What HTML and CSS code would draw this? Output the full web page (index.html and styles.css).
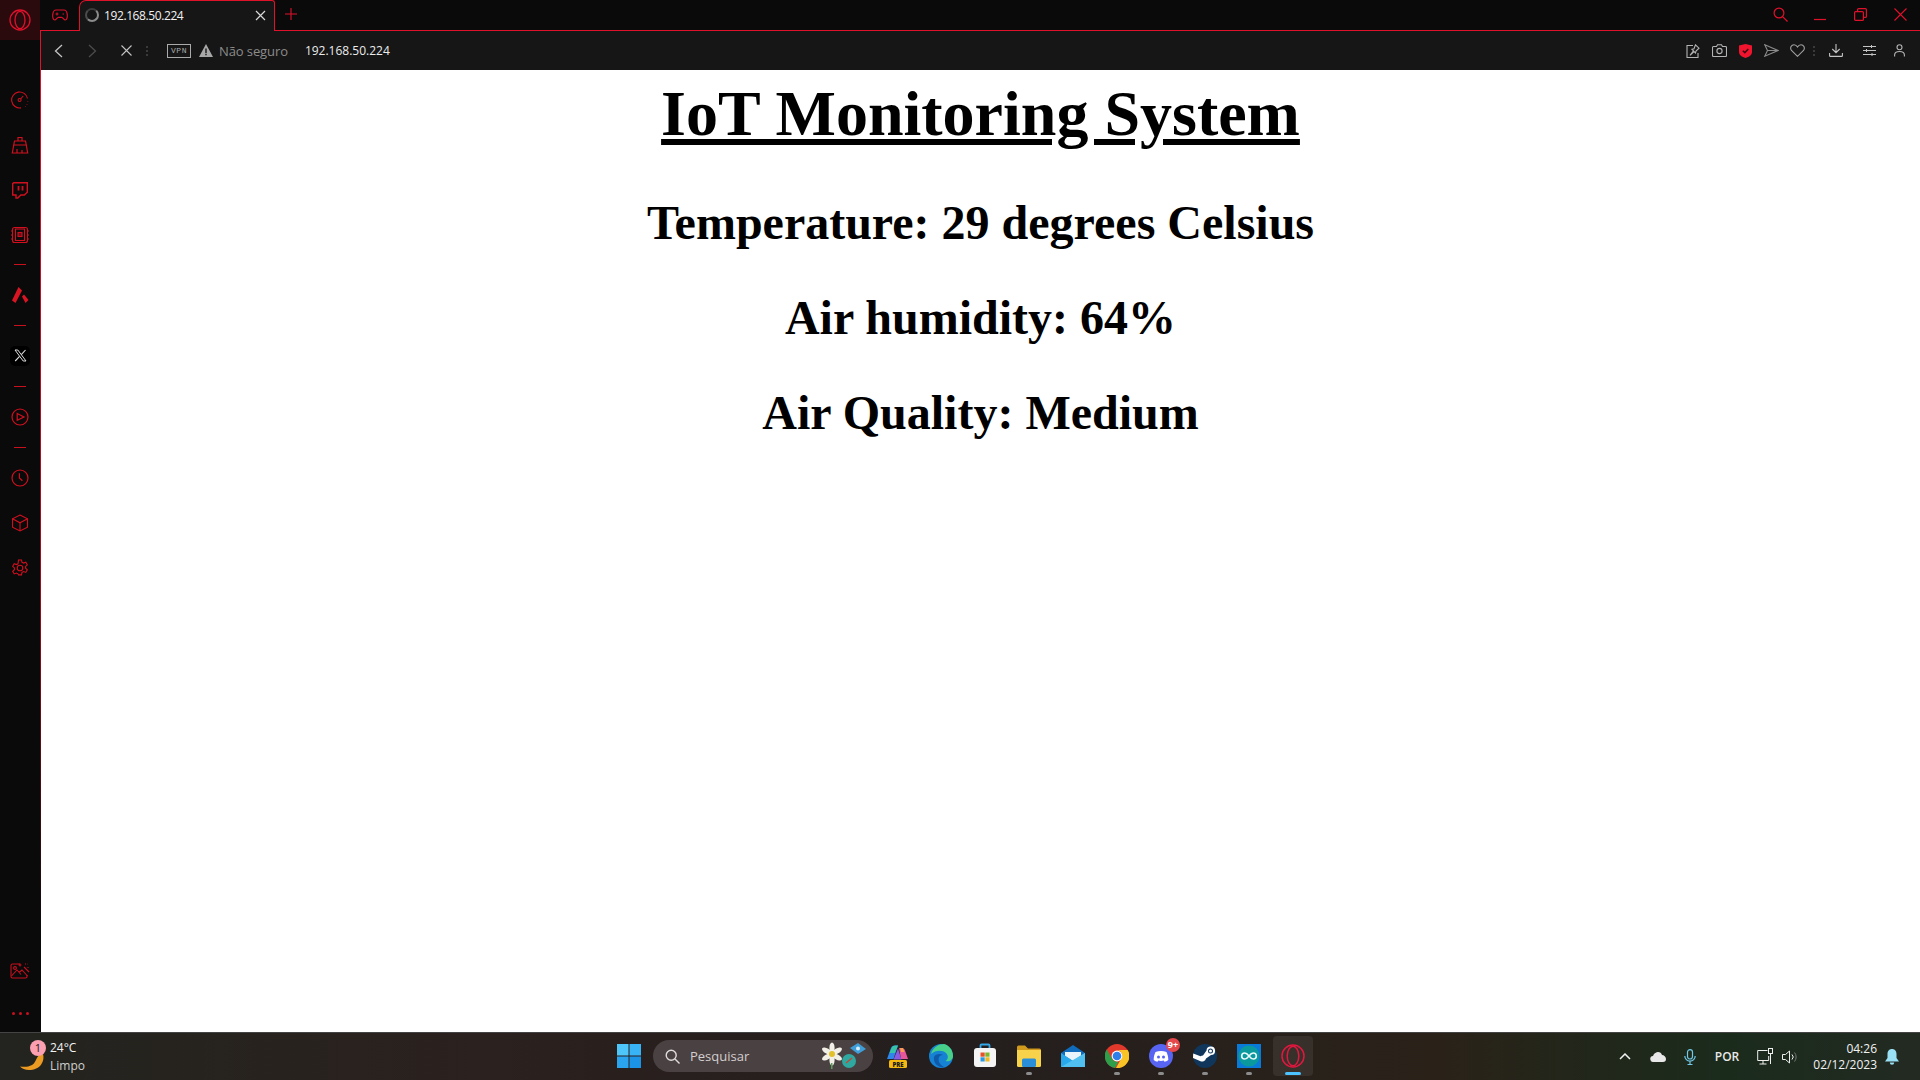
FILE: index.html
```html
<!doctype html>
<html lang="en">
  <head>
    <meta charset="UTF-8" />
    <meta name="viewport" content="width=device-width, initial-scale=1.0" />
    <title>IoT Monitoring System</title>
    <link rel="stylesheet" href="styles.css">
  </head>
  <body>
    <div class="desktop">
      <div class="browser">
        <!-- Sidebar -->
        <aside class="sidebar">
          <div class="side-logo">
            <svg width="24" height="24" viewBox="0 0 24 24" fill="none" stroke="#e0112b" stroke-width="1.3"><circle cx="12" cy="12" r="10"/><ellipse cx="12" cy="12" rx="5" ry="8.6"/></svg>
          </div>
          <div class="side-items">
            <div class="side-item">
              <svg width="18" height="18" viewBox="0 0 18 18" fill="none" stroke="#d0101f" stroke-width="1.1"><path d="M16.5 7.5A8 8 0 1 0 10 16.9"/><circle cx="8.6" cy="9" r="1.5"/><path d="M9.6 8l2.6-3"/><path d="M16.8 10v.6M16 13v.6M14.400 15.300v.5" stroke-width="1"/></svg>
            </div>
            <div class="side-item">
              <svg width="18" height="18" viewBox="0 0 18 18" fill="none" stroke="#d0101f" stroke-width="1.2"><path d="M7 5V1.500h4V5"/><path d="M3.500 5h11l2.200 12H1.300z"/><path d="M2.600 9h12.800M6 17v-4M11 17v-3"/></svg>
            </div>
            <div class="side-item">
              <svg width="18" height="18" viewBox="0 0 18 18" fill="none" stroke="#d0101f" stroke-width="1.400"><path d="M1.700 2.600 2.800 1.700h13.500v9.500l-3 2.800H9.800l-3 3H5v-3H1.700z"/><path d="M7.500 5v4.500M11.500 5v4.500" stroke-width="1.800"/></svg>
            </div>
            <div class="side-item">
              <svg width="18" height="18" viewBox="0 0 18 18" fill="none" stroke="#d0101f" stroke-width="1.100"><rect x="1.500" y="1.500" width="15" height="15" rx="2"/><rect x="4.500" y="3" width="9" height="11.500"/><rect x="7" y="6.500" width="4" height="4" fill="#d0101f" fill-opacity=".5"/><path d="M0 5h1.500M0 9h1.500M0 13h1.500M16.500 5H18M16.500 9H18M16.500 13H18"/></svg>
            </div>
            <div class="side-sep"></div>
            <div class="side-item short">
              <svg width="18" height="18" viewBox="0 0 18 18" fill="#d91524"><path d="M7.500 1 11 4.500 4.500 17 1 14.500z"/><path d="M11 10.500 13 8.500 17.500 14 14.500 17z"/></svg>
            </div>
            <div class="side-sep"></div>
            <div class="side-item short">
              <div class="x-tile">
                <svg width="13" height="13" viewBox="0 0 13 13" fill="none" stroke="#dcdcdc"><path d="M1 1h2.800l8.200 11H9.200z" stroke-width="1"/><path d="M11.500 1 7.300 5.600M5.600 7.300 1.200 12" stroke-width="1.100"/></svg>
              </div>
            </div>
            <div class="side-sep"></div>
            <div class="side-item short">
              <svg width="18" height="18" viewBox="0 0 18 18" fill="none" stroke="#d0101f" stroke-width="1.200"><circle cx="9" cy="9" r="8"/><path d="M6.200 5.500 13 9l-6.800 3.300z"/></svg>
            </div>
            <div class="side-sep"></div>
            <div class="side-item short-top">
              <svg width="18" height="18" viewBox="0 0 18 18" fill="none" stroke="#d0101f" stroke-width="1.200"><circle cx="9" cy="9" r="8"/><path d="M8.400 4.200V9l3 2.800"/></svg>
            </div>
            <div class="side-item">
              <svg width="18" height="18" viewBox="0 0 18 18" fill="none" stroke="#d0101f" stroke-width="1.100"><path d="M9 1l7.500 3.800v8.400L9 17l-7.500-3.800V4.800z"/><path d="M1.500 4.800 9 8.800l7.500-4M9 8.800V17"/></svg>
            </div>
            <div class="side-item">
              <svg width="18" height="18" viewBox="0 0 18 18" fill="none" stroke="#d0101f" stroke-width="1.100"><circle cx="9" cy="9" r="2.800"/><path d="M7.500 1h3l.5 2.300 1.600.8 2.200-.9 1.500 2.600-1.700 1.600v1.800l1.700 1.600-1.500 2.600-2.200-.9-1.600.8-.5 2.600h-3L7 14.800l-1.600-.8-2.200.9-1.500-2.600 1.700-1.600V8.900L1.700 7.300l1.500-2.600 2.200.9L7 4.800z"/></svg>
            </div>
          </div>
          <div class="side-bottom">
            <svg width="20" height="18" viewBox="0 0 20 18" fill="none" stroke="#c8101f" stroke-width="1.100"><path d="M10 2H2.500A1.500 1.500 0 0 0 1 3.500v11A1.500 1.500 0 0 0 2.500 16h13A1.500 1.500 0 0 0 17 14.500V13"/><path d="M1.500 14 7 8l4 4.500M9 10.500 12 8l5.500 6"/><circle cx="5" cy="6" r="1.400"/><path d="M10 1.500v3M8.500 3h3M14 5l5 5" /><path d="M15 2h2.500M18 5v2" stroke-dasharray="1 1"/></svg>
            <div class="side-more"><span></span><span></span><span></span></div>
          </div>
        </aside>

        <div class="window">
          <!-- Tab strip -->
          <div class="titlebar">
            <div class="games-btn">
              <svg width="16" height="12" viewBox="0 0 16 12" fill="none" stroke="#d8122a" stroke-width="1.200"><path d="M4 1h8c2 0 2.800 1.500 3.200 4 .4 3-.2 6-2 6-1.600 0-2-2.600-3.700-2.600H6.500C4.800 8.400 4.400 11 2.800 11 1 11 .4 8 .8 5 1.200 2.500 2 1 4 1z"/><path d="M3.500 5h3M5 3.500v3M10.500 5h1.500" stroke-width="1"/></svg>
            </div>
            <div class="tab">
              <span class="tab-spinner"></span>
              <span class="tab-title">192.168.50.224</span>
              <svg class="tab-close" width="11" height="11" viewBox="0 0 11 11" fill="none" stroke="#d8d8d8" stroke-width="1.200"><path d="M1 1l9 9M10 1l-9 9"/></svg>
            </div>
            <svg class="tab-add" width="12" height="12" viewBox="0 0 12 12" stroke="#e0112b" stroke-width="1.100"><path d="M6 0v12M0 6h12"/></svg>
            <div class="win-controls">
              <div class="win-btn">
                <svg width="15" height="15" viewBox="0 0 15 15" fill="none" stroke="#e0112b" stroke-width="1.200"><circle cx="6" cy="6" r="4.900"/><path d="M9.600 9.600 14.500 14.500"/></svg>
              </div>
              <div class="win-btn">
                <svg width="12" height="12" viewBox="0 0 12 12" stroke="#e0112b" stroke-width="1.200"><path d="M0 10.500h12"/></svg>
              </div>
              <div class="win-btn">
                <svg width="13" height="13" viewBox="0 0 13 13" fill="none" stroke="#e0112b" stroke-width="1.200"><rect x=".6" y="3.600" width="8.800" height="8.800" rx="1"/><path d="M3.600 3.500V1.600a1 1 0 0 1 1-1h6.800a1 1 0 0 1 1 1v6.800a1 1 0 0 1-1 1H9.500"/></svg>
              </div>
              <div class="win-btn">
                <svg width="13" height="13" viewBox="0 0 13 13" stroke="#e0112b" stroke-width="1.100"><path d="M.5.500l12 12M12.500.5l-12 12"/></svg>
              </div>
            </div>
          </div>

          <!-- Address bar -->
          <div class="toolbar">
            <div class="tool-btn back-btn">
              <svg width="9" height="14" viewBox="0 0 9 14" fill="none" stroke="#c4c4c4" stroke-width="1.300"><path d="M8 1 1.500 7 8 13"/></svg>
            </div>
            <div class="tool-btn forward-btn">
              <svg width="9" height="14" viewBox="0 0 9 14" fill="none" stroke="#4c4c4c" stroke-width="1.300"><path d="M1 1l6.500 6L1 13"/></svg>
            </div>
            <div class="tool-btn stop-btn">
              <svg width="11" height="11" viewBox="0 0 11 11" fill="none" stroke="#c4c4c4" stroke-width="1.100"><path d="M.5.500l10 10M10.500.5l-10 10"/></svg>
            </div>
            <div class="tool-dots"><span></span><span></span><span></span></div>
            <div class="vpn-badge">VPN</div>
            <svg class="warn-icon" width="14" height="13" viewBox="0 0 14 13"><path fill="#a8a8a8" fill-rule="evenodd" d="M7 0 14 13H0zM6.300 4.500v4.500h1.400V4.500zm0 5.300v1.500h1.400V9.800z"/></svg>
            <span class="not-secure">Não seguro</span>
            <span class="url">192.168.50.224</span>
            <div class="tool-right">
              <div class="icon-btn">
                <svg width="14" height="14" viewBox="0 0 14 14" fill="none" stroke="#b4b4b4" stroke-width="1.100"><path d="M7 1.500H1v12h11V9"/><path d="M9.500.8 13 4.200 10 7l-.5 2-1.500-1.500L4 11.300l3.500-4.500L6 5.300l2-.5z"/></svg>
              </div>
              <div class="icon-btn">
                <svg width="15" height="13" viewBox="0 0 15 13" fill="none" stroke="#b4b4b4" stroke-width="1.100"><path d="M1.500 2.500h3L5.500.7h4l1 1.800h3a1 1 0 0 1 1 1v8a1 1 0 0 1-1 1h-12a1 1 0 0 1-1-1v-8a1 1 0 0 1 1-1z"/><circle cx="7.500" cy="7" r="2.600"/></svg>
              </div>
              <div class="icon-btn">
                <svg width="13" height="14" viewBox="0 0 13 14"><path fill="#f0142f" d="M6.500 0 13 1.500V8c0 3-3 5-6.500 6C3 13 0 11 0 8V1.500z"/><path d="M3.800 6.800 5.800 8.600 9.300 5" fill="none" stroke="#3a0a10" stroke-width="1.500"/></svg>
              </div>
              <div class="icon-btn">
                <svg width="15" height="13" viewBox="0 0 15 13" fill="none" stroke="#8a8a8a" stroke-width="1.100"><path d="M.8.800 14 6.500.8 12.200 3.500 6.500zM3.500 6.500H14"/></svg>
              </div>
              <div class="icon-btn">
                <svg width="15" height="13" viewBox="0 0 15 13" fill="none" stroke="#a0a0a0" stroke-width="1.100"><path d="M7.500 12.300 1.500 6.500C-.5 3.800 1.500.7 4 .7c1.500 0 2.700.9 3.500 2.300C8.300 1.600 9.500.7 11 .7c2.500 0 4.500 3.100 2.500 5.800z"/></svg>
              </div>
              <div class="tool-dots narrow"><span></span><span></span><span></span></div>
              <div class="icon-btn wide">
                <svg width="14" height="13" viewBox="0 0 14 13" fill="none" stroke="#c4c4c4" stroke-width="1.100"><path d="M7 0v8.500M3.300 5 7 8.700 10.700 5M.6 9v2.700a.7.7 0 0 0 .7.700h11.400a.7.7 0 0 0 .7-.7V9"/></svg>
              </div>
              <div class="icon-btn mid">
                <svg width="13" height="11" viewBox="0 0 13 11" fill="none" stroke="#c4c4c4"><path d="M0 1.500h13M0 5.500h13M0 9.500h13"/><path d="M8.500 0v3M3.500 4v3M9 8v3"/></svg>
              </div>
              <div class="icon-btn last">
                <svg width="11" height="13" viewBox="0 0 11 13" fill="none" stroke="#b4b4b4" stroke-width="1.100"><circle cx="5.500" cy="3.200" r="2.500"/><path d="M.6 12.500V11c0-2 2-3.500 4.900-3.500s4.900 1.500 4.900 3.500v1.500"/></svg>
              </div>
            </div>
          </div>

          <!-- Page content -->
          <main class="page">
            <h1 class="page-title">IoT Monitoring System</h1>
            <h2 class="reading">Temperature: 29 degrees Celsius</h2>
            <h2 class="reading">Air humidity: 64%</h2>
            <h2 class="reading">Air Quality: Medium</h2>
          </main>
        </div>
      </div>

      <!-- Windows taskbar -->
      <footer class="taskbar">
        <div class="weather">
          <div class="weather-icon">
            <svg width="24" height="16" viewBox="0 0 24 16"><path fill="#eb9a22" d="M23 0c1 3 .5 7-1.500 10C19 14 14 16 9 16 5 16 2 14.500 0 12.500c4 .7 8.500.5 12-1.500 3-1.700 4-5.500 5.500-8C18.500 1.500 20.500.3 23 0z"/></svg>
            <span class="weather-badge">1</span>
          </div>
          <div class="weather-text">
            <span class="weather-temp">24°C</span>
            <span class="weather-desc">Limpo</span>
          </div>
        </div>

        <div class="task-center">
          <div class="task-app">
            <svg width="24" height="24" viewBox="0 0 24 24"><path fill="#4fc6fa" d="M0 0h11.500v11.500H0z"/><path fill="#38b3f5" d="M12.500 0H24v11.500H12.500z"/><path fill="#2aa4ee" d="M0 12.500h11.500V24H0z"/><path fill="#1c94e6" d="M12.500 12.500H24V24H12.500z"/></svg>
          </div>
          <div class="search-box">
            <svg width="15" height="15" viewBox="0 0 15 15" fill="none" stroke="#e0dcdc" stroke-width="1.400"><circle cx="6.200" cy="6.200" r="5"/><path d="M10 10l4.500 4.500"/></svg>
            <span class="search-label">Pesquisar</span>
            <svg class="search-art" width="46" height="28" viewBox="0 0 46 28"><g fill="#f2f0e6"><ellipse cx="11" cy="6" rx="2.600" ry="5.500"/><ellipse cx="11" cy="18" rx="2.600" ry="5.500"/><ellipse cx="6" cy="9" rx="5.500" ry="2.600" transform="rotate(30 6 9)"/><ellipse cx="16" cy="9" rx="5.500" ry="2.600" transform="rotate(-30 16 9)"/><ellipse cx="6" cy="15" rx="5.500" ry="2.600" transform="rotate(-30 6 15)"/><ellipse cx="16" cy="15" rx="5.500" ry="2.600" transform="rotate(30 16 15)"/></g><circle cx="11" cy="12" r="3" fill="#e2c02a"/><path d="M10 21h1.500v6H10z" fill="#5aa05a"/><circle cx="28" cy="19" r="7" fill="#2fa8a0"/><path d="M25 21l6-5" stroke="#c04a3a" stroke-width="1.500"/><path fill="#3f9ed8" d="M29 6l8-5 8 6-8 5z"/><circle cx="37" cy="6.500" r="2" fill="#d8eef8"/></svg>
          </div>
          <div class="task-app first-app">
            <svg width="24" height="24" viewBox="0 0 24 24"><path fill="#2f86ea" d="M2 15 6 4c.6-1.500 1.800-2.500 3.500-2.500H13L8.500 15z"/><path fill="#35c4a8" d="M6.500 4c1-1.800 2.500-2.500 4-2.500H13L10 9H4.500z"/><path fill="#e8569a" d="M14 4h3c1.500 0 2.500 1 3 2.500L23 15h-7z"/><path fill="#8a5ae0" d="M8.500 15.500 13 4.500 16.500 15.500z"/><path fill="#f5a04a" d="M15 4h3l1.500 4H16z"/><rect x="4" y="16" width="18" height="8" rx="1.500" fill="#f5b90f"/><text class="pre-text" x="13" y="22.600" text-anchor="middle">PRE</text></svg>
          </div>
          <div class="task-app">
            <svg width="24" height="24" viewBox="0 0 24 24"><circle cx="12" cy="12" r="12" fill="#1682d4"/><path fill="#46d08a" d="M2 10C4 3 10 0 15 0c5 1 9 6 9 12 0 4-4 6-7.500 5 3-2 3-5.500.5-8-3.500-3.500-11-3-15 1z"/><path fill="#0e5aa8" d="M5 13c1-3 6-4 9-2-4 0-5 3-4 7 1 2 3 4 5 5-5 1-11-3-10-10z"/></svg>
          </div>
          <div class="task-app">
            <svg width="24" height="25" viewBox="0 0 24 25"><path d="M7.500 6V2.500a1 1 0 0 1 1-1h7a1 1 0 0 1 1 1V6" fill="none" stroke="#35a8e8" stroke-width="1.800"/><rect x="1" y="5" width="22" height="19" rx="3" fill="#f4f4f4"/><path fill="#e8502a" d="M7.500 9.500H11.700v4.200H7.500z"/><path fill="#7cb82a" d="M12.300 9.500h4.200v4.200h-4.200z"/><path fill="#2a9ae8" d="M7.500 14.300H11.700v4.200H7.500z"/><path fill="#f5b81f" d="M12.300 14.300h4.200v4.200h-4.200z"/></svg>
          </div>
          <div class="task-app">
            <svg width="24" height="22" viewBox="0 0 24 22"><path fill="#d19a1c" d="M0 2a1.500 1.500 0 0 1 1.500-1.500h6.500L11 3.500h11.500A1.500 1.500 0 0 1 24 5v3H0z"/><path fill="#f8d24a" d="M0 5h24v15.500a1.500 1.500 0 0 1-1.500 1.500h-21A1.500 1.500 0 0 1 0 20.500z"/><rect x="5" y="13.500" width="14" height="8.500" rx="1.500" fill="#2a8fd8"/></svg>
            <span class="run-dot"></span>
          </div>
          <div class="task-app">
            <svg width="24" height="22" viewBox="0 0 24 22"><path fill="#0f6cbd" d="M12 0 24 8v14H0V8z"/><path fill="#e8f4fc" d="M4 7h16v4l-8 5-8-5z"/><path fill="#28a8ea" d="M0 8l12 8 12-8v14H0z"/><path fill="#50c0f0" d="M24 8v14H0z"/></svg>
          </div>
          <div class="task-app">
            <svg width="24" height="24" viewBox="0 0 24 24"><circle cx="12" cy="12" r="12" fill="#e0392b"/><path fill="#f7c325" d="M12 6h10.700A12 12 0 0 1 11 24l5.300-9.500A5.500 5.500 0 0 0 12 6z"/><path fill="#2e9e4a" d="M1.800 5.500 7.200 15a5.500 5.500 0 0 0 6.300 2.500L10 24A12 12 0 0 1 1.800 5.500z"/><circle cx="12" cy="12" r="5.400" fill="#fff"/><circle cx="12" cy="12" r="4.300" fill="#2f7fe8"/></svg>
            <span class="run-dot"></span>
          </div>
          <div class="task-app">
            <svg width="24" height="24" viewBox="0 0 24 24"><circle cx="12" cy="12" r="12" fill="#5865f2"/><path fill="#fff" d="M6.500 8c3.500-1.500 7.500-1.500 11 0 1.200 2.500 1.800 5 1.800 8-1.300 1-2.500 1.500-3.800 1.800l-.8-1.300c-1.800.5-3.600.5-5.400 0l-.8 1.300c-1.300-.3-2.500-.8-3.800-1.800 0-3 .6-5.500 1.800-8z"/><circle cx="9.500" cy="13" r="1.500" fill="#5865f2"/><circle cx="14.500" cy="13" r="1.500" fill="#5865f2"/></svg>
            <span class="chat-badge">9+</span>
            <span class="run-dot"></span>
          </div>
          <div class="task-app">
            <svg width="24" height="24" viewBox="0 0 24 24"><circle cx="12" cy="12" r="12" fill="#10365c"/><path fill="#fff" d="M0 14l7 3a4 4 0 0 0 6-2.500L18 11a4.300 4.300 0 1 0-4.500-4.500L10 11.500a4 4 0 0 0-2.500.8L.2 9.500z"/><circle cx="17.500" cy="7" r="2.500" fill="#10365c"/><circle cx="17.500" cy="7" r="1.500" fill="#fff"/></svg>
            <span class="run-dot"></span>
          </div>
          <div class="task-app">
            <svg width="24" height="24" viewBox="0 0 24 24"><rect width="24" height="24" fill="#0a7ad8"/><circle cx="12" cy="12" r="10.500" fill="#0a9a9e"/><path fill="none" stroke="#e8f8f8" stroke-width="1.600" d="M12 12c-1.500-2-2.700-3-4.300-3a3 3 0 0 0 0 6c1.600 0 2.800-1 4.300-3zm0 0c1.500-2 2.700-3 4.300-3a3 3 0 0 1 0 6c-1.600 0-2.800-1-4.300-3z"/></svg>
            <span class="run-dot"></span>
          </div>
          <div class="task-app active">
            <svg width="24" height="24" viewBox="0 0 24 24" fill="none" stroke="#e0173f" stroke-width="1.500"><circle cx="12" cy="12" r="11"/><ellipse cx="12" cy="12" rx="5.800" ry="9.800"/></svg>
            <span class="run-bar"></span>
          </div>
        </div>

        <div class="tray">
          <svg class="tray-icon chevron" width="12" height="7" viewBox="0 0 12 7" fill="none" stroke="#f2f2f2" stroke-width="1.500"><path d="M1 6l5-5 5 5"/></svg>
          <svg class="tray-icon cloud" width="16" height="10" viewBox="0 0 16 10" fill="#e8e8e8"><path d="M3.500 10a3 3 0 0 1-.5-6C4 1 6.500 0 8 0c2 0 3.500 1.300 4 3 2 0 4 2 4 4s-1 3-3 3z"/></svg>
          <svg class="tray-icon mic" width="12" height="16" viewBox="0 0 12 16" fill="none" stroke="#72c8e8" stroke-width="1.200"><rect x="3.500" y=".6" width="5" height="9.400" rx="2.500"/><path d="M.8 7a5.200 5.200 0 0 0 10.400 0M6 12.500V16M3.500 15.500h5"/></svg>
          <span class="tray-lang">POR</span>
          <svg class="tray-icon net" width="17" height="17" viewBox="0 0 17 17" fill="none" stroke="#efefef" stroke-width="1"><path d="M10.500 2.500H.7v10h11V8"/><path d="M6 12.500V16M2.500 16h7"/><rect x="11.500" y=".5" width="4" height="5"/><path d="M13.500 5.500V16"/></svg>
          <svg class="tray-icon sound" width="16" height="14" viewBox="0 0 16 14" fill="none" stroke="#efefef" stroke-width="1"><path d="M.5 4.500h3L7.500 1v12l-4-3.500h-3z"/><path d="M10 4.500a3.500 3.500 0 0 1 0 5"/><path d="M12.500 2.500a7 7 0 0 1 0 9" stroke="#777"/></svg>
          <div class="tray-clock">
            <span>04:26</span>
            <span>02/12/2023</span>
          </div>
          <svg class="tray-bell" width="14" height="16" viewBox="0 0 14 16" fill="#9ae0f5"><path d="M7 0c3 0 4.500 2.300 4.500 5v4L14 12.500H0L2.500 9V5C2.500 2.300 4 0 7 0z"/><path d="M4.800 13.500h4.400a2.200 2.200 0 0 1-4.400 0z"/></svg>
        </div>
      </footer>
    </div>
  </body>
</html>
```

FILE: styles.css
```css
* {
  box-sizing: border-box;
}

html,
body {
  height: 100%;
}

body {
  margin: 0;
  overflow: hidden;
  font-family: "Open Sans", "Noto Sans", sans-serif;
  background-color: #0a0a0a;
}

svg {
  display: block;
  flex-shrink: 0;
}

.desktop {
  display: flex;
  flex-direction: column;
  height: 1080px;
}

.browser {
  display: flex;
  flex: 1;
  min-height: 0;
}

/* sidebar */
.sidebar {
  display: flex;
  flex-direction: column;
  width: 40px;
  flex-shrink: 0;
  background-color: #0a0a0a;
}

.side-logo {
  display: flex;
  justify-content: center;
  align-items: center;
  height: 40px;
  background-color: #2b0a0e;
}

.side-items {
  display: flex;
  flex-direction: column;
  padding-top: 37px;
}

.side-item {
  display: flex;
  justify-content: center;
  align-items: center;
  height: 45px;
}

.side-item.short {
  height: 53px;
  margin-top: 3px;
}

.side-item.short-top {
  height: 45px;
  margin-top: 7px;
}

.side-sep {
  width: 12px;
  height: 1px;
  margin: 7px auto 0;
  background-color: #c8101f;
}

.side-item.short + .side-sep {
  margin-top: 4px;
}

.x-tile {
  display: flex;
  justify-content: center;
  align-items: center;
  width: 20px;
  height: 20px;
  border-radius: 5px;
  background-color: #000;
}

.side-bottom {
  display: flex;
  flex-direction: column;
  align-items: center;
  margin-top: auto;
  padding-bottom: 17px;
}

.side-more {
  display: flex;
  gap: 4px;
  margin-top: 32px;
}

.side-more span {
  width: 3px;
  height: 3px;
  border-radius: 50%;
  background-color: #c8101f;
}

/* window */
.window {
  display: flex;
  flex-direction: column;
  flex: 1;
  min-width: 0;
}

.titlebar {
  display: flex;
  align-items: flex-start;
  height: 31px;
  border-bottom: 1px solid #e0112b;
  background-color: #0a0a0a;
}

.games-btn {
  display: flex;
  justify-content: center;
  width: 39px;
  padding-top: 9px;
}

.tab {
  display: flex;
  align-items: center;
  width: 196px;
  height: 31px;
  padding: 0 8px 2px 5px;
  border: 1px solid #e0112b;
  border-bottom: none;
  border-radius: 7px 3px 0 0;
  background-color: #161616;
}

.tab-spinner {
  width: 14px;
  height: 14px;
  border: 2px solid #8c8c8c;
  border-top-color: #3c3c3c;
  border-left-color: #4c4c4c;
  border-radius: 50%;
}

.tab-title {
  margin-left: 5px;
  font-size: 12px;
  font-weight: 500;
  letter-spacing: -0.4px;
  color: #f2f2f2;
}

.tab-close {
  margin-left: auto;
}

.tab-add {
  margin: 8px 0 0 10px;
}

.win-controls {
  display: flex;
  margin-left: auto;
}

.win-btn {
  display: flex;
  justify-content: center;
  align-items: center;
  width: 40px;
  height: 29px;
}

.toolbar {
  display: flex;
  align-items: center;
  height: 39px;
  padding-left: 2px;
  border-left: 1px solid #e0112b;
  background-color: #161616;
}

.tool-btn {
  display: flex;
  justify-content: center;
  align-items: center;
}

.back-btn {
  width: 31px;
}

.forward-btn {
  width: 36px;
}

.stop-btn {
  width: 32px;
}

.tool-dots {
  display: flex;
  flex-direction: column;
  align-items: center;
  gap: 2px;
  width: 8px;
  margin-left: 1px;
}

.tool-dots span {
  width: 2px;
  height: 2px;
  background-color: #3a3a3a;
}

.tool-dots.narrow {
  margin: 0;
}

.vpn-badge {
  width: 24px;
  height: 14px;
  margin-left: 16px;
  border: 1px solid #aaa;
  font-family: "Liberation Mono", monospace;
  font-size: 8px;
  line-height: 12px;
  letter-spacing: 0.6px;
  text-align: center;
  color: #aaa;
}

.warn-icon {
  margin-left: 8px;
}

.not-secure {
  margin-left: 6px;
  font-size: 13px;
  letter-spacing: -0.1px;
  color: #8c8c8c;
}

.url {
  margin-left: 17px;
  font-size: 12px;
  font-weight: 500;
  color: #ececec;
}

.tool-right {
  display: flex;
  align-items: center;
  margin-left: auto;
  padding-right: 5px;
}

.icon-btn {
  display: flex;
  justify-content: center;
  align-items: center;
  width: 26px;
}

.icon-btn.wide {
  width: 36px;
}

.icon-btn.mid {
  width: 30px;
}

.icon-btn.last {
  width: 31px;
}

/* page */
.page {
  flex: 1;
  border-left: 1px solid;
  border-image: linear-gradient(#e0112b, #a00c1c 55%, #0a0a0a 90%) 1;
  background-color: #fff;
  font-family: "Liberation Serif", "Times New Roman", serif;
  color: #000;
  text-align: center;
}

.page-title {
  margin: 7px 0 0;
  font-size: 64px;
  font-weight: bold;
  line-height: 74px;
  text-decoration: underline;
}

.reading {
  margin: 40px 0 0;
  font-size: 48px;
  font-weight: bold;
  line-height: 55px;
}

.page-title + .reading {
  margin-top: 44px;
}

/* taskbar */
.taskbar {
  display: flex;
  align-items: center;
  height: 48px;
  flex-shrink: 0;
  border-top: 1px solid #444;
  background: linear-gradient(90deg, #23241f 0%, #2b211e 25%, #241e1e 50%, #2a2219 75%, #1a2b1c 90%, #232a22 100%);
  color: #f2f2f2;
}

.weather {
  display: flex;
  align-items: center;
  width: 607px;
  padding-left: 20px;
}

.weather-icon {
  position: relative;
  width: 24px;
  height: 16px;
  margin-top: 10px;
}

.weather-badge {
  position: absolute;
  top: -14px;
  left: 10px;
  width: 16px;
  height: 16px;
  border-radius: 50%;
  background-color: #fb9fb1;
  font-size: 11px;
  line-height: 16px;
  text-align: center;
  color: #1a1a1a;
}

.weather-text {
  display: flex;
  flex-direction: column;
  margin-left: 6px;
  font-size: 12px;
  line-height: 18px;
}

.weather-desc {
  color: #cfcfcf;
}

.task-center {
  display: flex;
  align-items: center;
  padding-bottom: 1px;
}

.task-app {
  display: flex;
  justify-content: center;
  align-items: center;
  position: relative;
  width: 44px;
  height: 40px;
  padding-bottom: 1px;
}

.task-app.first-app {
  margin-left: 2px;
}

.task-app.active {
  width: 40px;
  margin-left: 2px;
  border-radius: 4px;
  background-color: rgba(255, 255, 255, 0.07);
}

.pre-text {
  font-family: "Open Sans", sans-serif;
  font-size: 6px;
  font-weight: 800;
  fill: #1a1a1a;
}

.run-dot {
  position: absolute;
  bottom: 1px;
  left: 19px;
  width: 6px;
  height: 3px;
  border-radius: 2px;
  background-color: #8c8c8c;
}

.run-bar {
  position: absolute;
  bottom: 1px;
  left: 12px;
  width: 16px;
  height: 3px;
  border-radius: 2px;
  background-color: #4cc2ff;
}

.chat-badge {
  position: absolute;
  top: 2px;
  right: 3px;
  width: 14px;
  height: 14px;
  border-radius: 50%;
  background-color: #e5484d;
  font-size: 9px;
  font-weight: 700;
  line-height: 14px;
  text-align: center;
  color: #fff;
}

.search-box {
  display: flex;
  align-items: center;
  width: 220px;
  height: 32px;
  margin-left: 2px;
  padding: 0 6px 0 12px;
  border-radius: 16px;
  background-color: #4a4142;
}

.search-label {
  margin-left: 10px;
  font-size: 13px;
  color: #d4cfcf;
}

.search-art {
  margin-left: auto;
}

.tray {
  display: flex;
  align-items: center;
  flex: 1;
  min-width: 0;
  justify-content: flex-end;
  padding-right: 21px;
  font-size: 12px;
}

.tray-icon.cloud {
  margin-left: 19px;
}

.tray-icon.mic {
  margin-left: 18px;
}

.tray-lang {
  margin-left: 19px;
  font-weight: 600;
  color: #e8e8e8;
}

.tray-icon.net {
  margin-left: 18px;
}

.tray-icon.sound {
  margin-left: 8px;
}

.tray-clock {
  display: flex;
  flex-direction: column;
  align-items: flex-end;
  margin-left: 15px;
  font-size: 12px;
  line-height: 16px;
}

.tray-bell {
  margin-left: 8px;
}
```
